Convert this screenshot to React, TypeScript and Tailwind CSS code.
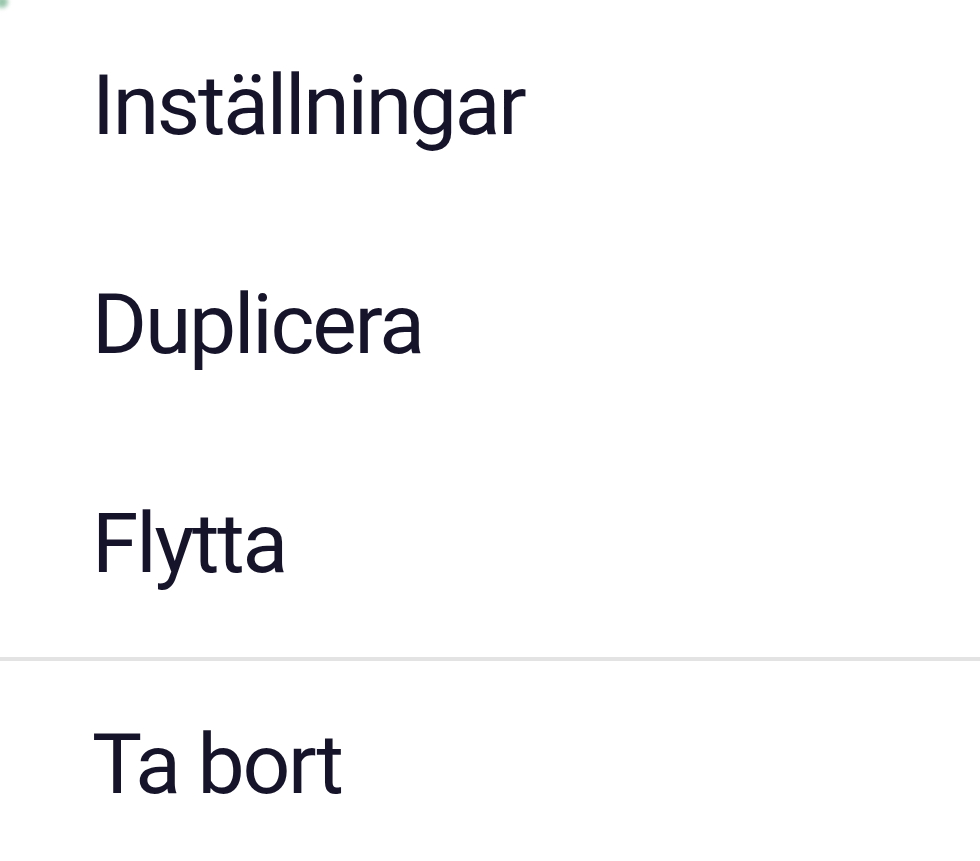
const items = ["Inställningar", "Duplicera", "Flytta"];

export default function App() {
  return (
    <div
      className="relative h-[861px] w-[980px] overflow-hidden bg-white text-[#16142a] tracking-[-2.2px]"
      style={{ fontFamily: "Roboto, 'Liberation Sans', sans-serif" }}
    >
      {/* stray green corner from the crop */}
      <div className="absolute -left-1 -top-1 h-3 w-3 rounded-full bg-[#6fae8a] opacity-70 blur-[2px]" />

      <ul>
        {items.map((label) => (
          <li key={label} className="h-[219px] pl-[92px] pt-[64px] text-[84px] leading-[84px]">
            {label}
          </li>
        ))}
      </ul>
      <div className="h-[4px] bg-[#e3e3e3]" />
      <div className="pl-[92px] pt-[62px] text-[84px] leading-[84px]">Ta bort</div>
    </div>
  );
}
